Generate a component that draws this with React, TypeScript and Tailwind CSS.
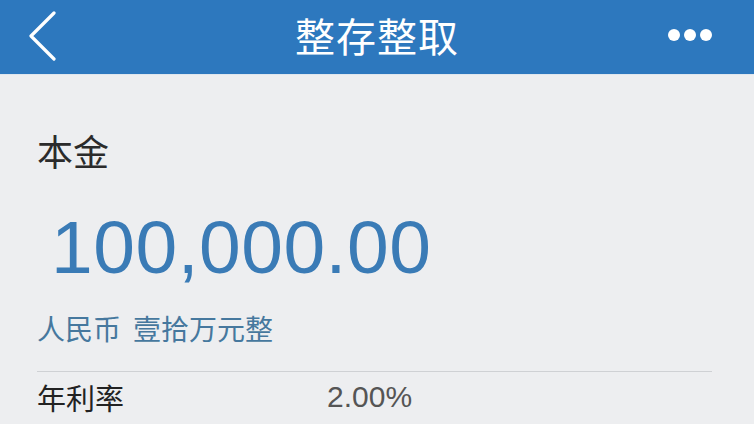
export default function App() {
  const cjk = { fontFamily: '"Noto Sans CJK SC", "Noto Sans", sans-serif' };
  const num = { fontFamily: '"Liberation Sans", Arial, sans-serif' };

  return (
    <div className="w-[754px] h-[424px] overflow-hidden bg-[#edeef0]" style={cjk}>
      {/* header */}
      <div className="relative h-[75px] bg-[#2d78be] flex items-center justify-center border-b border-[#dfe6ee]">
        <button className="absolute left-[26px] top-[10px] w-[32px] h-[52px] flex items-center justify-center">
          <svg width="30" height="50" viewBox="0 0 30 50" fill="none">
            <path d="M27 2 L4 25 L27 48" stroke="#ffffff" strokeWidth="3.2" strokeLinecap="round" strokeLinejoin="round" />
          </svg>
        </button>
        <h1 className="text-white text-[40px] leading-none tracking-[1px] -mt-[4px]">整存整取</h1>
        <div className="absolute right-[42px] top-[29px] flex gap-[4px]">
          <span className="w-[12px] h-[12px] rounded-full bg-white" />
          <span className="w-[12px] h-[12px] rounded-full bg-white" />
          <span className="w-[12px] h-[12px] rounded-full bg-white" />
        </div>
      </div>

      {/* body */}
      <div className="pl-[37px] pr-[42px]">
        <div className="pt-[54px] text-[36px] leading-[42px] text-[#2b2b2b]">本金</div>
        <div className="mt-[39px] pl-[14px] text-[75px] leading-none tracking-[0.5px] text-[#3a7bb6]" style={num}>
          100,000.00
        </div>
        <div className="mt-[27px] flex gap-[12px] text-[28px] leading-[32px] text-[#46789e]">
          <span>人民币</span>
          <span>壹拾万元整</span>
        </div>
        <div className="mt-[27px] border-t border-[#cfd1d4]" />
        <div className="mt-[8px] flex items-center">
          <span className="w-[290px] text-[29px] leading-[34px] text-[#222222]">年利率</span>
          <span className="text-[30px] leading-[34px] text-[#555555]" style={num}>2.00%</span>
        </div>
      </div>
    </div>
  );
}
